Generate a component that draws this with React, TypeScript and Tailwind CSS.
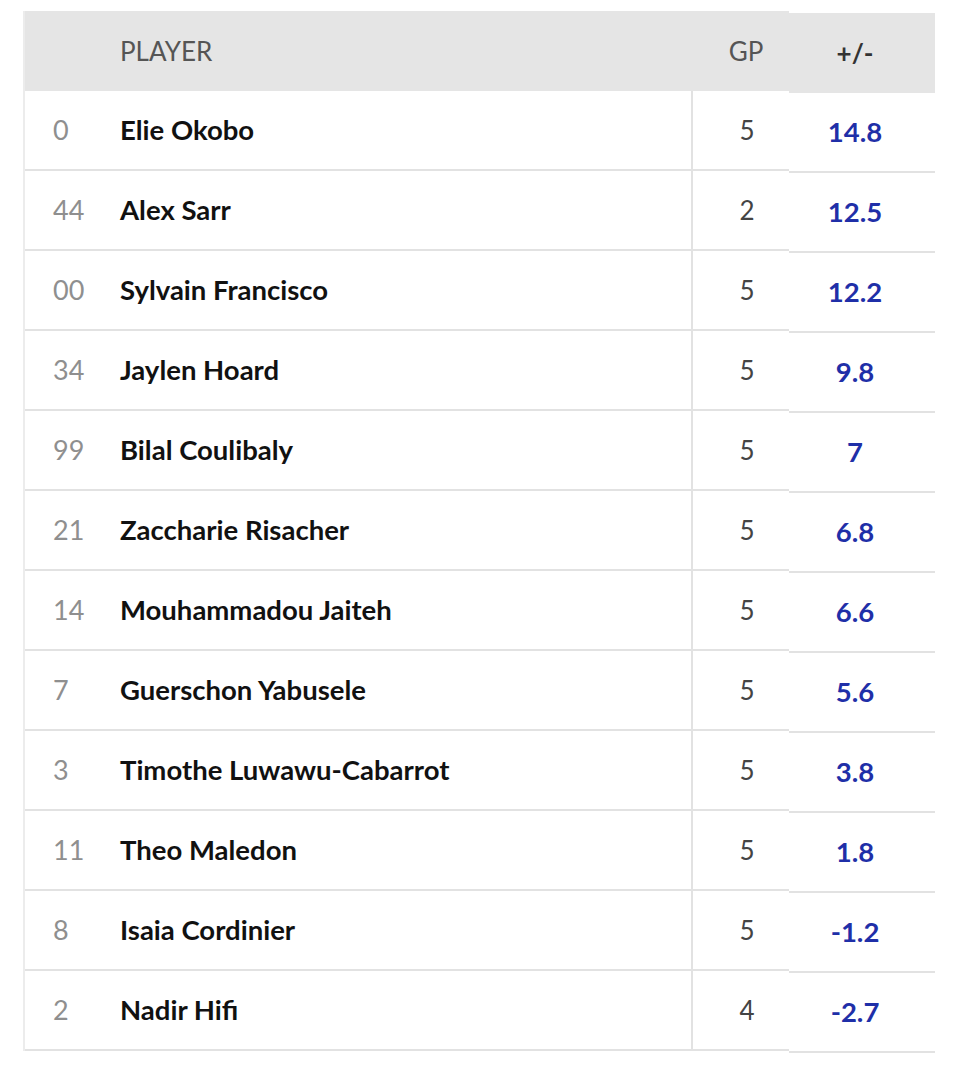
const players = [
  { num: "0", name: "Elie Okobo", gp: 5, pm: "14.8" },
  { num: "44", name: "Alex Sarr", gp: 2, pm: "12.5" },
  { num: "00", name: "Sylvain Francisco", gp: 5, pm: "12.2" },
  { num: "34", name: "Jaylen Hoard", gp: 5, pm: "9.8" },
  { num: "99", name: "Bilal Coulibaly", gp: 5, pm: "7" },
  { num: "21", name: "Zaccharie Risacher", gp: 5, pm: "6.8" },
  { num: "14", name: "Mouhammadou Jaiteh", gp: 5, pm: "6.6" },
  { num: "7", name: "Guerschon Yabusele", gp: 5, pm: "5.6" },
  { num: "3", name: "Timothe Luwawu-Cabarrot", gp: 5, pm: "3.8" },
  { num: "11", name: "Theo Maledon", gp: 5, pm: "1.8" },
  { num: "8", name: "Isaia Cordinier", gp: 5, pm: "-1.2" },
  { num: "2", name: "Nadir Hifi", gp: 4, pm: "-2.7" },
];

export default function App() {
  return (
    <div className="min-h-screen bg-white pt-[11px] pl-[23px] font-['Lato','Open_Sans',sans-serif]">
      <div className="flex items-start">
        {/* main table */}
        <div className="w-[766px] border-l-2 border-[#ececec]">
          <div className="flex h-[80px] items-center bg-[#e5e5e5] text-[26px] text-[#555]">
            <div className="w-[95px]" />
            <div className="flex-1">PLAYER</div>
            <div className="w-[98px] pl-[12px] text-center">GP</div>
          </div>
          {players.map((p) => (
            <div key={p.name} className="flex h-[80px] items-stretch border-b-2 border-[#e2e2e2]">
              <div className="flex w-[28px] items-center" />
              <div className="flex w-[67px] items-center text-[27px] text-[#8f8f8f]">{p.num}</div>
              <div className="flex flex-1 items-center text-[27.5px] font-bold text-[#111]">{p.name}</div>
              <div className="flex w-[98px] items-center justify-center border-l-2 border-[#e2e2e2] pl-[12px] text-[26px] text-[#444]">
                {p.gp}
              </div>
            </div>
          ))}
        </div>

        {/* plus/minus column */}
        <div className="mt-[2px] w-[146px]">
          <div className="flex h-[80px] items-center justify-center bg-[#e5e5e5] pr-[14px] text-[26px] font-bold text-[#333]">
            +/-
          </div>
          {players.map((p) => (
            <div
              key={p.name}
              className="flex h-[80px] items-center justify-center border-b-2 border-[#e2e2e2] pr-[14px] text-[27.5px] font-bold text-[#1f2fa8]"
            >
              {p.pm}
            </div>
          ))}
        </div>
      </div>
    </div>
  );
}
